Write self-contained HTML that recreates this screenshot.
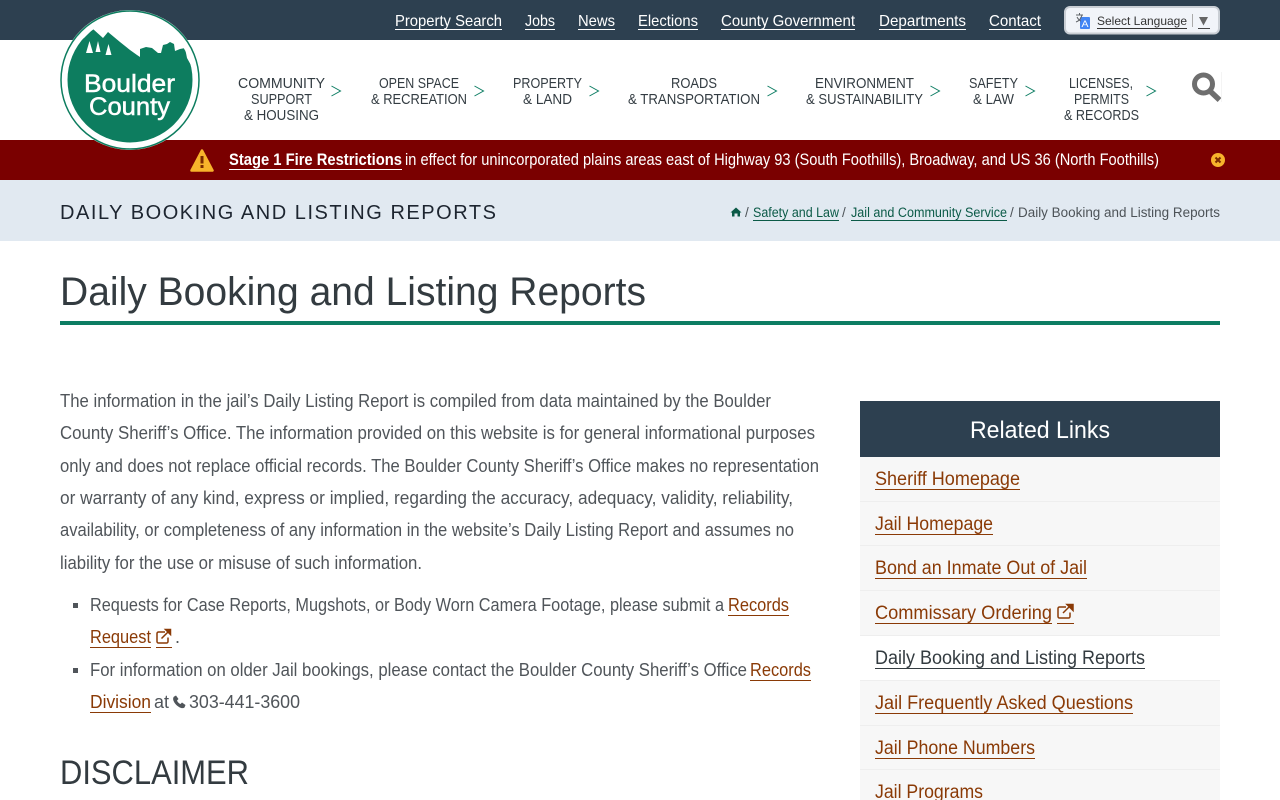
<!DOCTYPE html>
<html lang="en">
<head>
<meta charset="utf-8">
<title>Daily Booking and Listing Reports</title>
<style>
html,body{margin:0;padding:0;background:#fff;width:1280px;height:800px;overflow:hidden}
svg{display:block}
text{font-family:"Liberation Sans",sans-serif}
.top{font-size:16px;fill:#fff}
.nav{font-size:15px;fill:#333c42}
.arr{stroke:#0d7d63;stroke-width:1;fill:none}
.al{font-size:16.5px;fill:#fff}
.bc{font-size:13.5px;fill:#0b5a47}
.bg{font-size:13.5px;fill:#4d5358}
.b{font-size:18px;fill:#50555a}
.l{font-size:18px;fill:#8a3a06}
.s{font-size:19px;fill:#8a3a06}
</style>
</head>
<body>
<svg width="1280" height="800" viewBox="0 0 1280 800" xmlns="http://www.w3.org/2000/svg">
<defs><clipPath id="c"><circle cx="130" cy="80" r="62.5"/></clipPath></defs>
<rect width="1280" height="800" fill="#fff"/>
<rect width="1280" height="40" fill="#2d4050"/>

<g class="top">
<text class="top" x="395" y="26" textLength="107" lengthAdjust="spacingAndGlyphs">Property Search</text>
<text class="top" x="525" y="26" textLength="30" lengthAdjust="spacingAndGlyphs">Jobs</text>
<text class="top" x="578" y="26" textLength="37" lengthAdjust="spacingAndGlyphs">News</text>
<text class="top" x="638" y="26" textLength="60" lengthAdjust="spacingAndGlyphs">Elections</text>
<text class="top" x="721" y="26" textLength="134" lengthAdjust="spacingAndGlyphs">County Government</text>
<text class="top" x="879" y="26" textLength="87" lengthAdjust="spacingAndGlyphs">Departments</text>
<text class="top" x="989" y="26" textLength="52" lengthAdjust="spacingAndGlyphs">Contact</text>
</g>
<g fill="#fff">
<rect x="395" y="29" width="107" height="1"/><rect x="525" y="29" width="30" height="1"/><rect x="578" y="29" width="37" height="1"/><rect x="638" y="29" width="60" height="1"/><rect x="721" y="29" width="134" height="1"/><rect x="879" y="29" width="87" height="1"/><rect x="989" y="29" width="52" height="1"/>
</g>

<rect x="1065" y="7" width="154" height="26.500" rx="5" fill="#f1f4f9" stroke="#c9ced4" stroke-width="2"/>
<rect x="1080" y="17" width="10" height="12" rx="1" fill="#4285f4"/>
<text x="1081.500" y="27" font-size="9" fill="#fff" textLength="7" lengthAdjust="spacingAndGlyphs">A</text>
<path d="M1076 15h7M1079.500 13v2M1082 15c-1 4-3 6-6 7M1077 17c1 2 3 4 4 4" stroke="#5f6368" stroke-width="1" fill="none"/>
<text x="1097" y="25" font-size="12" fill="#333" textLength="90" lengthAdjust="spacingAndGlyphs">Select Language</text>
<rect x="1097" y="28" width="90" height="1" fill="#333"/>
<rect x="1192" y="14" width="1" height="13" fill="#aaa"/>
<path d="M1199 17h9l-4.500 8.500z" fill="#666"/>
<rect x="1198" y="28" width="12" height="1" fill="#444"/>

<text class="nav" x="238" y="88" textLength="87" lengthAdjust="spacingAndGlyphs">COMMUNITY</text>
<text class="nav" x="251" y="104" textLength="61" lengthAdjust="spacingAndGlyphs">SUPPORT</text>
<text class="nav" x="244" y="120" textLength="75" lengthAdjust="spacingAndGlyphs">&amp; HOUSING</text>
<text class="nav" x="379" y="88" textLength="80" lengthAdjust="spacingAndGlyphs">OPEN SPACE</text>
<text class="nav" x="371" y="104" textLength="96" lengthAdjust="spacingAndGlyphs">&amp; RECREATION</text>
<text class="nav" x="513" y="88" textLength="69" lengthAdjust="spacingAndGlyphs">PROPERTY</text>
<text class="nav" x="523" y="104" textLength="49" lengthAdjust="spacingAndGlyphs">&amp; LAND</text>
<text class="nav" x="671" y="88" textLength="46" lengthAdjust="spacingAndGlyphs">ROADS</text>
<text class="nav" x="628" y="104" textLength="132" lengthAdjust="spacingAndGlyphs">&amp; TRANSPORTATION</text>
<text class="nav" x="815" y="88" textLength="99" lengthAdjust="spacingAndGlyphs">ENVIRONMENT</text>
<text class="nav" x="806" y="104" textLength="117" lengthAdjust="spacingAndGlyphs">&amp; SUSTAINABILITY</text>
<text class="nav" x="969" y="88" textLength="49" lengthAdjust="spacingAndGlyphs">SAFETY</text>
<text class="nav" x="973" y="104" textLength="41" lengthAdjust="spacingAndGlyphs">&amp; LAW</text>
<text class="nav" x="1069" y="88" textLength="64" lengthAdjust="spacingAndGlyphs">LICENSES,</text>
<text class="nav" x="1074" y="104" textLength="55" lengthAdjust="spacingAndGlyphs">PERMITS</text>
<text class="nav" x="1064" y="120" textLength="75" lengthAdjust="spacingAndGlyphs">&amp; RECORDS</text>
<path class="arr" d="M331.500 86l9 5-9 5M474.500 86l9 5-9 5M589.500 86l9 5-9 5M767.500 86l9 5-9 5M930.500 86l9 5-9 5M1025.500 86l9 5-9 5M1146.500 86l9 5-9 5"/>

<circle cx="1203.500" cy="84" r="9" fill="none" stroke="#6e6e6e" stroke-width="5"/>
<path d="M1210.500 91.500l9 8.500" stroke="#6e6e6e" stroke-width="5.500" fill="none"/>
<rect x="1221" y="72" width="1" height="30" fill="#f4f4f4"/>

<rect y="140" width="1280" height="40" fill="#7a0000"/>
<path d="M202 150.500L212.500 170.500H191.500Z" fill="#f7b32b" stroke="#f7b32b" stroke-width="2.500" stroke-linejoin="round"/>
<rect x="200.500" y="156" width="3" height="7.500" fill="#7a2a00"/><rect x="200.500" y="165" width="3" height="3" fill="#7a2a00"/>
<text class="al" x="229" y="165" font-weight="bold" textLength="173" lengthAdjust="spacingAndGlyphs">Stage 1 Fire Restrictions</text>
<rect x="229" y="169" width="173" height="1" fill="#fff"/>
<text class="al" x="405" y="165" textLength="754" lengthAdjust="spacingAndGlyphs">in effect for unincorporated plains areas east of Highway 93 (South Foothills), Broadway, and US 36 (North Foothills)</text>
<circle cx="1218" cy="160" r="7" fill="#f7b32b"/>
<path d="M1215.500 157.500l5 5M1220.500 157.500l-5 5" stroke="#7a2a00" stroke-width="2"/>

<circle cx="130" cy="80" r="70" fill="#fff"/>
<circle cx="130" cy="80" r="69" fill="none" stroke="#0d7d5f" stroke-width="1.500"/>
<g clip-path="url(#c)">
<path fill="#0d7d5f" d="M60 80L74 43L84 38L93 29L103 38L108 32L120 42L130 50L137 55L140 57L140 49L146 47L152 48L158 53L161 53L163 45L167 44L170 42L174 44L175 51L180 49L185 48L187 58L192 67L200 80L200 150L60 150Z"/>
<path fill="#fff" d="M89.500 41l3.500 12h-7zM98 41l2.500 11h-5zM108.500 44l3 11h-6z"/>
</g>
<text x="84" y="92" font-size="25" fill="#fff" stroke="#fff" stroke-width="0.500" textLength="91" lengthAdjust="spacingAndGlyphs">Boulder</text>
<text x="89" y="115" font-size="25" fill="#fff" stroke="#fff" stroke-width="0.500" textLength="81" lengthAdjust="spacingAndGlyphs">County</text>

<rect y="180" width="1280" height="61" fill="#e1e9f1"/>
<text x="60" y="219" font-size="20" fill="#1d2530" textLength="436" lengthAdjust="spacing">DAILY BOOKING AND LISTING REPORTS</text>
<path d="M736 207.500l5.500 5h-1.500v4h-2.500v-3h-3v3h-2.500v-4h-1.500z" fill="#0b5a47"/>
<text class="bg" x="745" y="217">/</text>
<text class="bc" x="753" y="217" textLength="86" lengthAdjust="spacingAndGlyphs">Safety and Law</text>
<rect x="753" y="220" width="86" height="1" fill="#0b5a47"/>
<text class="bg" x="842" y="217">/</text>
<text class="bc" x="851" y="217" textLength="156" lengthAdjust="spacingAndGlyphs">Jail and Community Service</text>
<rect x="851" y="220" width="156" height="1" fill="#0b5a47"/>
<text class="bg" x="1010" y="217">/</text>
<text class="bg" x="1018" y="217" textLength="202" lengthAdjust="spacingAndGlyphs">Daily Booking and Listing Reports</text>

<text x="60" y="305" font-size="40" fill="#333b40" textLength="586" lengthAdjust="spacingAndGlyphs">Daily Booking and Listing Reports</text>
<rect x="60" y="321" width="1160" height="4" fill="#0d7d63"/>

<text class="b" x="60" y="407" textLength="711" lengthAdjust="spacingAndGlyphs">The information in the jail’s Daily Listing Report is compiled from data maintained by the Boulder</text>
<text class="b" x="60" y="439" textLength="755" lengthAdjust="spacingAndGlyphs">County Sheriff’s Office. The information provided on this website is for general informational purposes</text>
<text class="b" x="60" y="472" textLength="759" lengthAdjust="spacingAndGlyphs">only and does not replace official records. The Boulder County Sheriff’s Office makes no representation</text>
<text class="b" x="60" y="504" textLength="733" lengthAdjust="spacingAndGlyphs">or warranty of any kind, express or implied, regarding the accuracy, adequacy, validity, reliability,</text>
<text class="b" x="60" y="536" textLength="734" lengthAdjust="spacingAndGlyphs">availability, or completeness of any information in the website’s Daily Listing Report and assumes no</text>
<text class="b" x="60" y="569" textLength="362" lengthAdjust="spacingAndGlyphs">liability for the use or misuse of such information.</text>

<rect x="73" y="603" width="5" height="5" fill="#50555a"/>
<text class="b" x="90" y="611" textLength="634" lengthAdjust="spacingAndGlyphs">Requests for Case Reports, Mugshots, or Body Worn Camera Footage, please submit a</text>
<text class="l" x="728" y="611" textLength="61" lengthAdjust="spacingAndGlyphs">Records</text>
<rect x="728" y="615" width="61" height="1" fill="#8a3a06"/>
<text class="l" x="90" y="643" textLength="61" lengthAdjust="spacingAndGlyphs">Request</text>
<rect x="90" y="647" width="61" height="1" fill="#8a3a06"/>
<path d="M165 632h-6.500a1.500 1.500 0 0 0-1.500 1.500v8a1.500 1.500 0 0 0 1.500 1.500h8a1.500 1.500 0 0 0 1.500-1.500v-4" fill="none" stroke="#8a3a06" stroke-width="1.500"/>
<path d="M161.500 638.500l7-7M165.500 629.500h5v5z" fill="#8a3a06" stroke="#8a3a06" stroke-width="1.500"/>
<rect x="156" y="647" width="16" height="1" fill="#8a3a06"/>
<text class="b" x="175" y="643">.</text>
<rect x="73" y="668" width="5" height="5" fill="#50555a"/>
<text class="b" x="90" y="676" textLength="657" lengthAdjust="spacingAndGlyphs">For information on older Jail bookings, please contact the Boulder County Sheriff’s Office</text>
<text class="l" x="750" y="676" textLength="61" lengthAdjust="spacingAndGlyphs">Records</text>
<rect x="750" y="680" width="61" height="1" fill="#8a3a06"/>
<text class="l" x="90" y="708" textLength="61" lengthAdjust="spacingAndGlyphs">Division</text>
<rect x="90" y="712" width="61" height="1" fill="#8a3a06"/>
<text class="b" x="154" y="708" textLength="15" lengthAdjust="spacingAndGlyphs">at</text>
<path d="M176 695.500l2.500 3.500-1.500 1.500c.5 1.500 2 3 3.500 3.500l1.500-1.500 3.500 2.500-1 2.500c-1 .8-2.500 .8-4 .2-3-1.200-6-4.200-7-7-.6-1.500-.5-3 .3-4z" fill="#50555a"/>
<text class="b" x="189" y="708" textLength="111" lengthAdjust="spacingAndGlyphs">303-441-3600</text>

<text x="60" y="784" font-size="34" fill="#333b40" textLength="189" lengthAdjust="spacingAndGlyphs">DISCLAIMER</text>

<rect x="860" y="457" width="360" height="343" fill="#f7f7f7"/>
<rect x="860" y="636" width="360" height="44" fill="#fff"/>
<g fill="#eeeeee">
<rect x="860" y="501" width="360" height="1"/><rect x="860" y="545" width="360" height="1"/><rect x="860" y="590" width="360" height="1"/><rect x="860" y="635" width="360" height="1"/><rect x="860" y="680" width="360" height="1"/><rect x="860" y="725" width="360" height="1"/><rect x="860" y="769" width="360" height="1"/>
</g>
<rect x="860" y="401" width="360" height="56" fill="#2d4050"/>
<text x="970" y="438" font-size="24" fill="#fff" textLength="140" lengthAdjust="spacingAndGlyphs">Related Links</text>

<text class="s" x="875" y="485" textLength="145" lengthAdjust="spacingAndGlyphs">Sheriff Homepage</text>
<rect x="875" y="489" width="145" height="1" fill="#8a3a06"/>
<text class="s" x="875" y="530" textLength="118" lengthAdjust="spacingAndGlyphs">Jail Homepage</text>
<rect x="875" y="534" width="118" height="1" fill="#8a3a06"/>
<text class="s" x="875" y="574" textLength="212" lengthAdjust="spacingAndGlyphs">Bond an Inmate Out of Jail</text>
<rect x="875" y="578" width="212" height="1" fill="#8a3a06"/>
<text class="s" x="875" y="619" textLength="177" lengthAdjust="spacingAndGlyphs">Commissary Ordering</text>
<rect x="875" y="623" width="177" height="1" fill="#8a3a06"/>
<path d="M1066 607h-6.500a1.500 1.500 0 0 0-1.500 1.500v8a1.500 1.500 0 0 0 1.500 1.500h9a1.500 1.500 0 0 0 1.500-1.500v-4" fill="none" stroke="#8a3a06" stroke-width="1.500"/>
<path d="M1063 613l8-8M1067 604.500h6v6z" fill="#8a3a06" stroke="#8a3a06" stroke-width="1.500"/>
<rect x="1057" y="623" width="17" height="1" fill="#8a3a06"/>
<text x="875" y="664" font-size="19" fill="#333b40" textLength="270" lengthAdjust="spacingAndGlyphs">Daily Booking and Listing Reports</text>
<rect x="875" y="668" width="270" height="1" fill="#333b40"/>
<text class="s" x="875" y="709" textLength="258" lengthAdjust="spacingAndGlyphs">Jail Frequently Asked Questions</text>
<rect x="875" y="713" width="258" height="1" fill="#8a3a06"/>
<text class="s" x="875" y="754" textLength="160" lengthAdjust="spacingAndGlyphs">Jail Phone Numbers</text>
<rect x="875" y="758" width="160" height="1" fill="#8a3a06"/>
<text class="s" x="875" y="798" textLength="108" lengthAdjust="spacingAndGlyphs">Jail Programs</text>
</svg>
</body>
</html>
